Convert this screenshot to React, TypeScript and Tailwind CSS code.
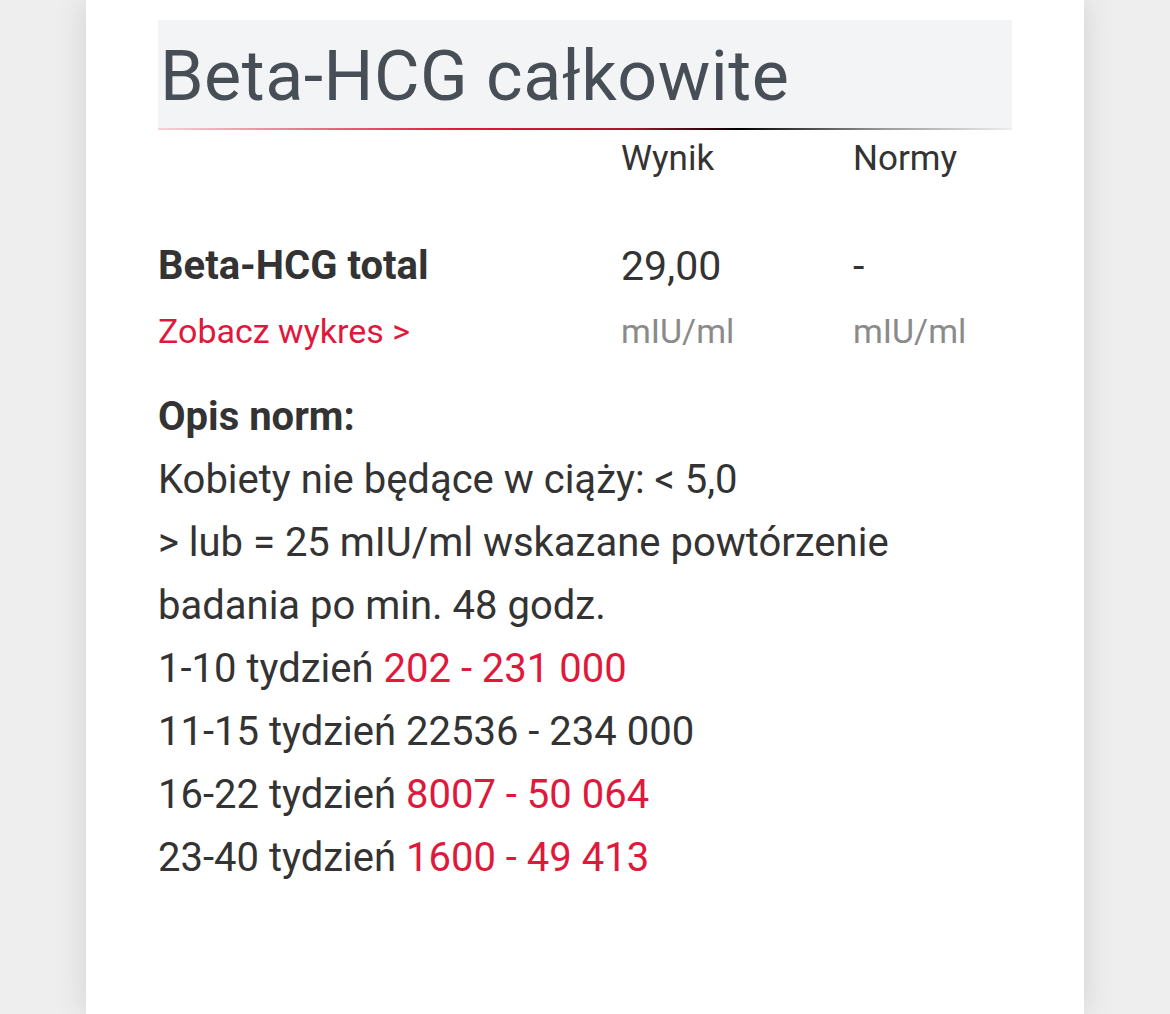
import React from 'react';

const red = 'text-[#e0193c]';

function NormLine({ label, range, hot }: { label: string; range: string; hot?: boolean }) {
  return (
    <p>
      {label} <span className={hot ? red : ''}>{range}</span>
    </p>
  );
}

export default function App() {
  return (
    <div className="min-h-[1014px] w-full bg-[#eeeeee] font-['Roboto',sans-serif]">
      <div className="mx-auto min-h-[1014px] w-[998px] bg-white shadow-[0_0_30px_rgba(0,0,0,0.12)] px-[72px] pt-[20px]">
        {/* header */}
        <div className="bg-[#f3f4f6]">
          <h1 className="h-[108px] pl-[2px] pt-[2px] text-[70px] leading-[108px] text-[#474e56] tracking-[0.5px]">Beta-HCG całkowite</h1>
          <div className="h-[2px] bg-[linear-gradient(90deg,#f3d3d9_0%,#e0193c_35%,#b0152f_55%,#000000_68%,#9a9a9a_85%,#eeeeee_100%)]"></div>
        </div>

        {/* table */}
        <div className="grid grid-cols-[463px_232px_1fr] text-[#333333]">
          <div></div>
          <div className="pt-[9px] text-[35px] leading-[40px]">Wynik</div>
          <div className="pt-[9px] text-[35px] leading-[40px]">Normy</div>

          <div className="pt-[62px] text-[40px] font-bold leading-[50px]">Beta-HCG total</div>
          <div className="pt-[62px] text-[41px] leading-[50px]">29,00</div>
          <div className="pt-[62px] text-[41px] leading-[50px]">-</div>

          <div className={`pt-[20px] text-[34px] leading-[40px] ${red}`}>Zobacz wykres &gt;</div>
          <div className="pt-[20px] text-[34px] leading-[40px] text-[#8a8a8a]">mIU/ml</div>
          <div className="pt-[20px] text-[34px] leading-[40px] text-[#8a8a8a]">mIU/ml</div>
        </div>

        {/* norms */}
        <div className="pt-[34px] text-[40px] leading-[63px] text-[#333333]">
          <p className="font-bold">Opis norm:</p>
          <p>Kobiety nie będące w ciąży: &lt; 5,0</p>
          <p>&gt; lub = 25 mIU/ml wskazane powtórzenie</p>
          <p>badania po min. 48 godz.</p>
          <NormLine label="1-10 tydzień" range="202 - 231 000" hot />
          <NormLine label="11-15 tydzień" range="22536 - 234 000" />
          <NormLine label="16-22 tydzień" range="8007 - 50 064" hot />
          <NormLine label="23-40 tydzień" range="1600 - 49 413" hot />
        </div>
      </div>
    </div>
  );
}
